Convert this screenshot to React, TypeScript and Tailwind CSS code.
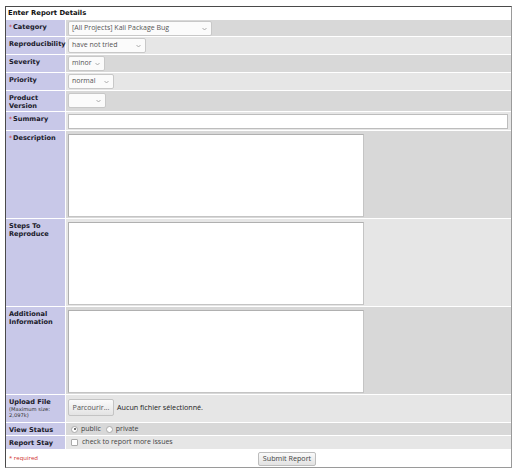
import React from "react";

const labelCls =
  "bg-[#c8c8e8] pl-[3px] pr-[2px] pt-[3px] font-bold text-[6.6px] leading-[8px] text-[#1a1a2a] [font-family:'DejaVu_Sans',Verdana,sans-serif]";
const valueFont = "[font-family:'Open_Sans','Liberation_Sans',sans-serif]";

function Req() {
  return <span className="mr-px text-[6px] font-normal text-[#d03030]">*</span>;
}

function Chevron() {
  return (
    <svg width="5" height="4" viewBox="0 0 5 4" className="shrink-0">
      <path d="M0.5 1 L2.5 3 L4.5 1" fill="none" stroke="#999" strokeWidth="0.8" />
    </svg>
  );
}

function FakeSelect({ text, width }: { text: string; width: string }) {
  return (
    <div
      className={`flex h-[15px] items-center justify-between rounded-[2px] border border-[#c8c8c8] bg-[#fbfbfb] pl-[3px] pr-[4px] text-[7px] text-[#555] ${valueFont} ${width}`}
    >
      <span className="whitespace-nowrap">{text}</span>
      <Chevron />
    </div>
  );
}

function Row({
  label,
  required,
  dark,
  height,
  children,
}: {
  label: React.ReactNode;
  required?: boolean;
  dark: boolean;
  height: string;
  children?: React.ReactNode;
}) {
  return (
    <>
      <div className={`${labelCls} ${height}`}>
        {required && <Req />}
        {label}
      </div>
      <div className={`${dark ? "bg-[#d8d8d8]" : "bg-[#e6e6e6]"} ${height} pl-[2px]`}>
        {children}
      </div>
    </>
  );
}

function Area() {
  return (
    <div className="mt-[3px] h-[83px] w-[296px] border border-[#c4c4c4] border-t-[#b0b0b0] border-l-[#b0b0b0] bg-white" />
  );
}

export default function App() {
  return (
    <div className="min-h-[475px] w-[517px] bg-white pl-[5px] pt-[6px]">
      <div className="w-[507px] border border-[#4a4a4a] border-r-[#9a9a9a] border-b-[#9a9a9a] bg-white">
        <div className="grid grid-cols-[59px_445px] gap-px bg-white">
          <div className="col-span-2 h-[12px] pl-[2px] pt-[2px] text-[6.8px] font-bold leading-[8px] text-[#111] [font-family:'DejaVu_Sans',Verdana,sans-serif]">
            Enter Report Details
          </div>

          <Row label="Category" required dark height="h-[16px]">
            <div className="pt-px">
              <FakeSelect text="[All Projects] Kali Package Bug" width="w-[144px]" />
            </div>
          </Row>
          <Row label="Reproducibility" dark={false} height="h-[17px]">
            <div className="pt-px">
              <FakeSelect text="have not tried" width="w-[78px]" />
            </div>
          </Row>
          <Row label="Severity" dark height="h-[17px]">
            <div className="pt-px">
              <FakeSelect text="minor" width="w-[37px]" />
            </div>
          </Row>
          <Row label="Priority" dark={false} height="h-[17px]">
            <div className="pt-px">
              <FakeSelect text="normal" width="w-[46px]" />
            </div>
          </Row>
          <Row
            label={
              <>
                Product
                <br />
                Version
              </>
            }
            dark
            height="h-[20px]"
          >
            <div className="pt-[2px]">
              <FakeSelect text="" width="w-[38px]" />
            </div>
          </Row>
          <Row label="Summary" required dark={false} height="h-[18px]">
            <div className="pt-[2px]">
              <div className="h-[15px] w-[440px] border border-[#bdbdbd] bg-white" />
            </div>
          </Row>
          <Row label="Description" required dark height="h-[87px]">
            <Area />
          </Row>
          <Row
            label={
              <>
                Steps To
                <br />
                Reproduce
              </>
            }
            dark={false}
            height="h-[87px]"
          >
            <Area />
          </Row>
          <Row
            label={
              <>
                Additional
                <br />
                Information
              </>
            }
            dark
            height="h-[87px]"
          >
            <Area />
          </Row>
          <Row
            label={
              <>
                Upload File
                <br />
                <span className="block text-[5.2px] font-normal leading-[6px] text-[#333]">
                  (Maximum size:
                  <br />
                  2,097k)
                </span>
              </>
            }
            dark={false}
            height="h-[27px]"
          >
            <div className={`flex items-center gap-[3px] pt-[4px] text-[7.2px] text-[#222] ${valueFont}`}>
              <div className="flex h-[17px] w-[46px] items-center justify-center rounded-[2px] border border-[#c4c4c4] bg-gradient-to-b from-[#fafafa] to-[#e4e4e4] text-[#555]">
                Parcourir...
              </div>
              <span>Aucun fichier sélectionné.</span>
            </div>
          </Row>
          <Row label="View Status" dark height="h-[12px]">
            <div className={`flex items-center gap-[3px] pl-[3px] pt-[2px] text-[7px] leading-[8px] text-[#444] ${valueFont}`}>
              <span className="flex h-[7px] w-[7px] items-center justify-center rounded-full border border-[#aaa] bg-white">
                <span className="h-[2px] w-[2px] rounded-full bg-[#444]" />
              </span>
              <span>public</span>
              <span className="ml-[2px] h-[7px] w-[7px] rounded-full border border-[#aaa] bg-white" />
              <span>private</span>
            </div>
          </Row>
          <Row label="Report Stay" dark={false} height="h-[13px]">
            <div className={`flex items-center gap-[4px] pl-[3px] pt-[2px] text-[7px] leading-[8px] text-[#444] ${valueFont}`}>
              <span className="h-[7px] w-[7px] rounded-[1px] border border-[#aaa] bg-white" />
              <span>check to report more issues</span>
            </div>
          </Row>

          <div className="col-span-2 flex h-[17px] items-center bg-white">
            <span className={`w-[252px] pl-[3px] text-[6px] text-[#d03030] ${valueFont}`}>
              * required
            </span>
            <div
              className={`flex h-[14px] w-[58px] items-center justify-center rounded-[2px] border border-[#bdbdbd] bg-gradient-to-b from-[#fafafa] to-[#e2e2e2] text-[7.2px] text-[#444] ${valueFont}`}
            >
              Submit Report
            </div>
          </div>
        </div>
      </div>
    </div>
  );
}
